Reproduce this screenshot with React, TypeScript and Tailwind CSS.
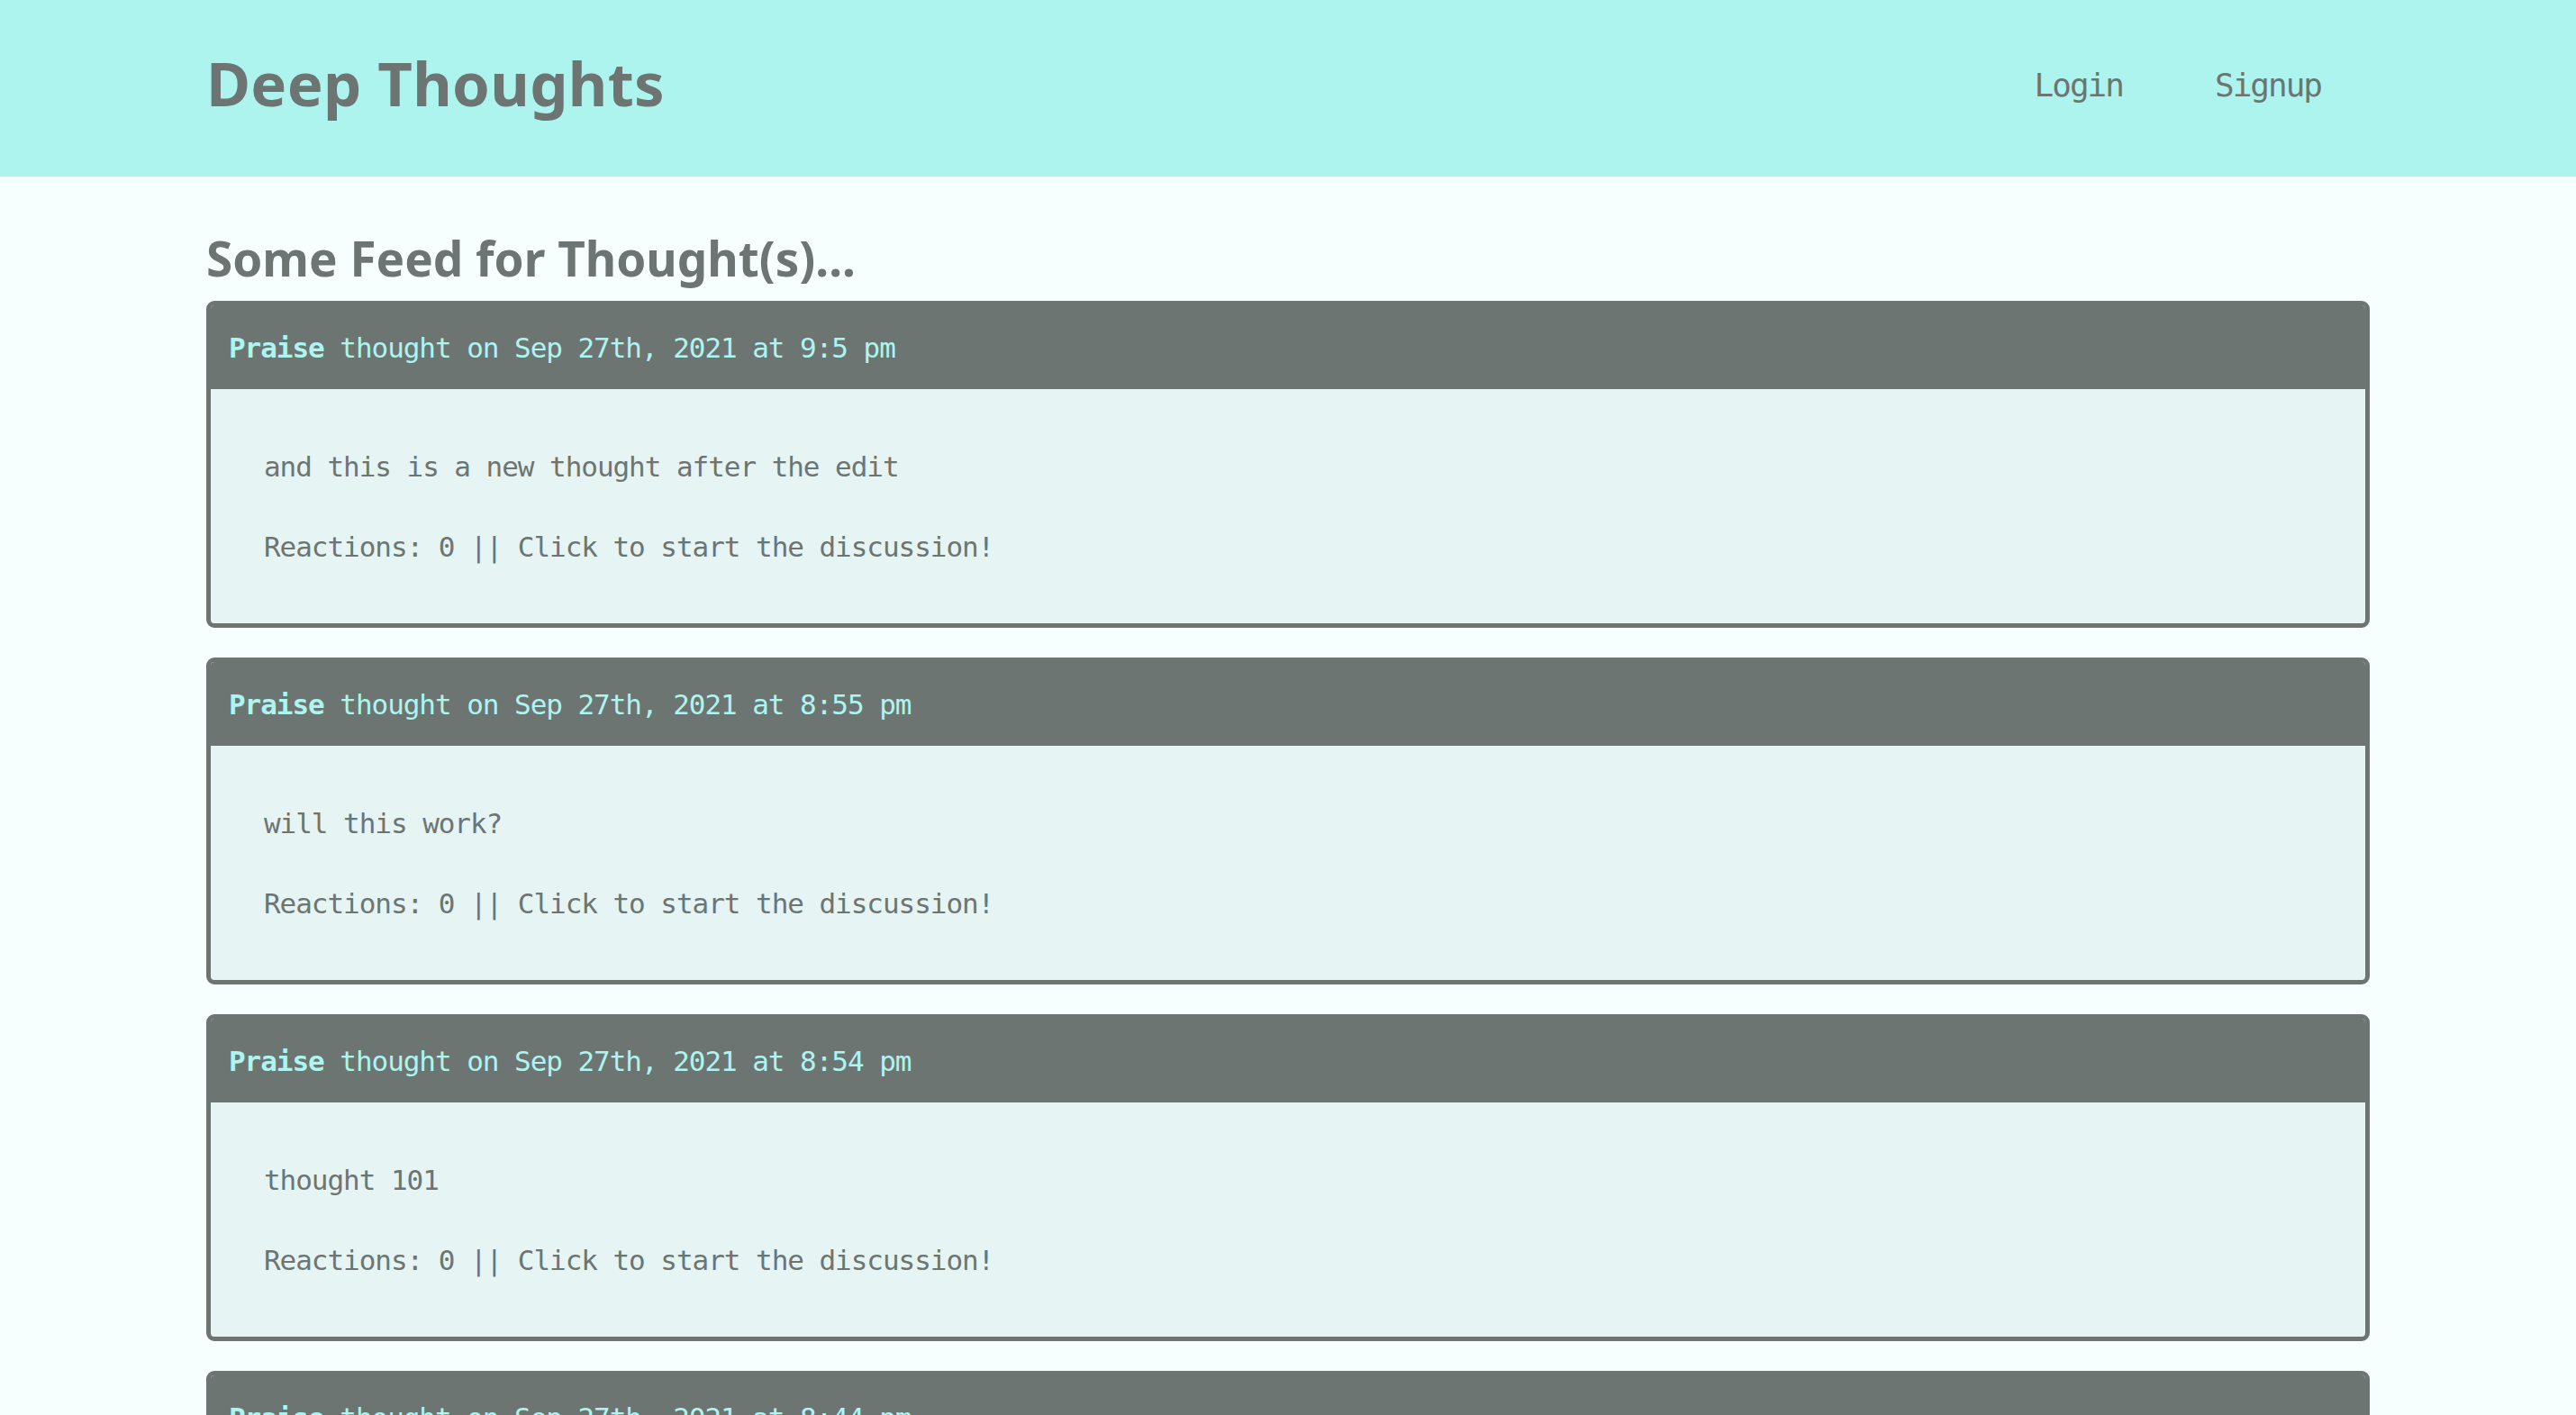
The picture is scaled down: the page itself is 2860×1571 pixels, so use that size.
import React from "react";

const thoughts = [
  { time: "9:5 pm", text: "and this is a new thought after the edit" },
  { time: "8:55 pm", text: "will this work?" },
  { time: "8:54 pm", text: "thought 101" },
  { time: "8:44 pm", text: "another thought" },
];

const mono = "font-['DejaVu_Sans_Mono','Liberation_Mono',monospace]";
const sans = "font-['Noto_Sans','Open_Sans',sans-serif]";

function ThoughtCard({ time, text }: { time: string; text: string }) {
  return (
    <div className="mb-[33px] rounded-[9px] border-[5px] border-[#6d7573] bg-[#e6f4f3] overflow-hidden">
      <div className={`flex h-[93px] items-center bg-[#6d7573] pl-[20px] ${mono} text-[31px] leading-[40px] tracking-[-1.05px] text-[#aef4ef]`}>
        <span className="font-bold">Praise</span>
        <span>&nbsp;thought on Sep 27th, 2021 at {time}</span>
      </div>
      <div className={`pl-[59px] pt-[66px] pb-[65px] ${mono} text-[31px] leading-[40px] tracking-[-1.05px] text-[#6d7573]`}>
        <p>{text}</p>
        <p className="mt-[49px]">Reactions: 0 || Click to start the discussion!</p>
      </div>
    </div>
  );
}

export default function App() {
  return (
    <div className="min-h-screen bg-[#f6fffe]">
      <header className="bg-[#adf4ef]">
        <div className="mx-auto flex h-[196px] w-[2402px] items-start justify-between">
          <h1 className={`pt-[52px] ${sans} text-[67px] font-bold leading-[80px] tracking-[0.3px] text-[#6d7573]`}>
            Deep Thoughts
          </h1>
          <nav className={`mr-[54px] flex gap-[102px] pt-[75px] ${mono} text-[36px] leading-[40px] tracking-[-2px] text-[#6d7573]`}>
            <a>Login</a>
            <a>Signup</a>
          </nav>
        </div>
      </header>
      <main className="mx-auto w-[2402px] pt-[59px]">
        <h2 className={`mb-[15px] ${sans} text-[53px] font-bold leading-[64px] text-[#6d7573]`}>
          Some Feed for Thought(s)...
        </h2>
        {thoughts.map((t) => (
          <ThoughtCard key={t.time} time={t.time} text={t.text} />
        ))}
      </main>
    </div>
  );
}
